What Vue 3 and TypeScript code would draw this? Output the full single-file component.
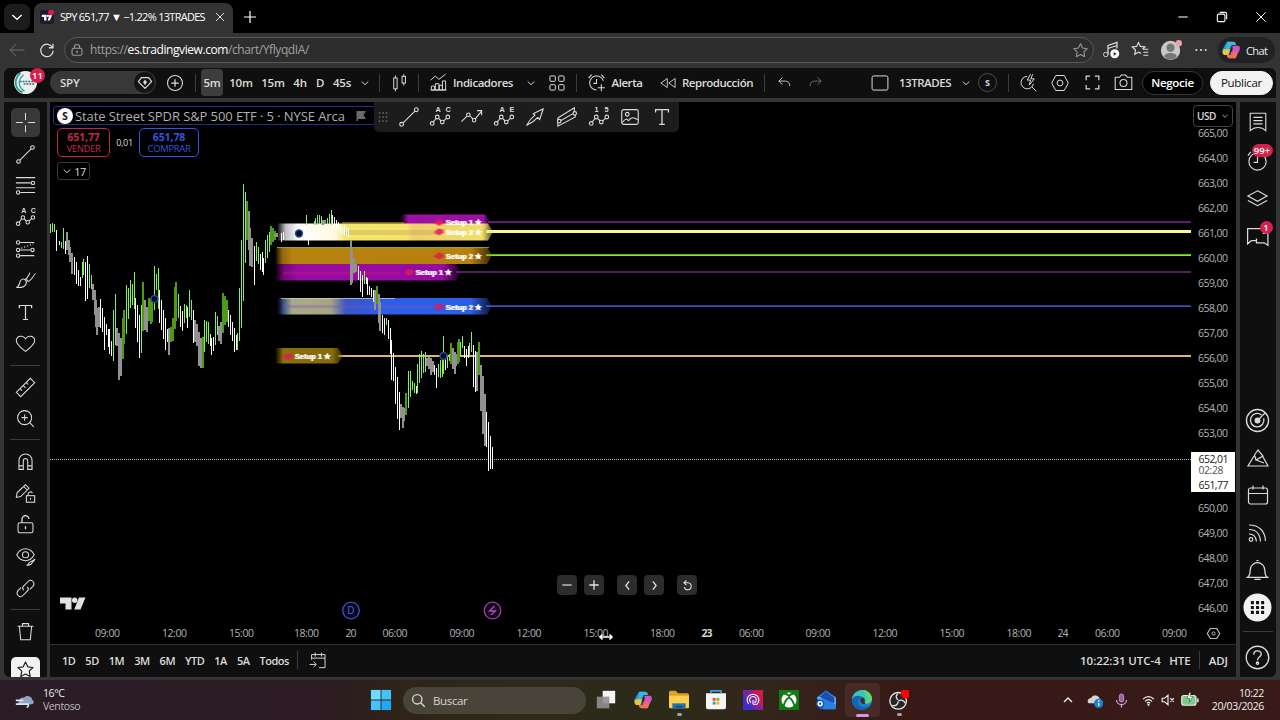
<template>
  <div class="screen">
    <div class="tabstrip">
      <div class="tab-menu"><Icon name="chevron" :size="14" /></div>
      <div class="tab">
        <Icon name="favicon" :size="14" class="fav" />
        <span class="tab-title">SPY 651,77 ▼ −1.22% 13TRADES</span>
        <Icon name="close" :size="12" class="tab-close" />
      </div>
      <Icon name="plus" :size="18" class="new-tab" />
      <div class="win-buttons">
        <Icon name="minimize" :size="14" />
        <Icon name="restore" :size="14" />
        <Icon name="close" :size="14" />
      </div>
    </div>

    <div class="addressbar">
      <Icon name="back" :size="18" class="dim" />
      <Icon name="reload" :size="18" class="reload" />
      <div class="url">
        <Icon name="padlock" :size="14" class="gray" />
        <span class="url-text">https://<b>es.tradingview.com</b>/chart/YflyqdIA/</span>
        <Icon name="star" :size="17" class="gray" />
      </div>
      <div class="browser-tools">
        <Icon name="music" :size="18" />
        <Icon name="favorites" :size="18" />
        <Icon name="profile" :size="22" />
        <Icon name="dots" :size="16" />
      </div>
      <div class="chat"><Icon name="copilot" :size="20" /><span>Chat</span></div>
    </div>

    <div class="app">
      <div class="topbar">
        <div class="cell avatar">
          <Icon name="avatar" :size="23" />
          <span class="badge">11</span>
        </div>
        <div class="symbol">
          <span>SPY</span>
          <i><Icon name="gem" :size="16" /></i>
        </div>
        <div class="cell add"><Icon name="addCircle" :size="20" /></div>
        <i class="sep s1"></i>
        <span class="cell iv active">5m</span>
        <span class="cell iv i10">10m</span>
        <span class="cell iv i15">15m</span>
        <span class="cell iv i4h">4h</span>
        <span class="cell iv id">D</span>
        <span class="cell iv i45">45s</span>
        <div class="cell w20"><Icon name="chevron" :size="10" /></div>
        <i class="sep s2"></i>
        <div class="cell candles-btn"><Icon name="candles" :size="20" /></div>
        <i class="sep s3"></i>
        <div class="cell ind"><Icon name="indicators" :size="19" /></div>
        <span class="cell label indt">Indicadores</span>
        <div class="cell indc"><Icon name="chevron" :size="10" /></div>
        <div class="cell w24"><Icon name="grid4" :size="20" /></div>
        <i class="sep s4"></i>
        <div class="cell alarm"><Icon name="alarm" :size="21" /></div>
        <span class="cell label alert">Alerta</span>
        <div class="cell rew"><Icon name="rewind" :size="18" /></div>
        <span class="cell label replay">Reproducción</span>
        <i class="sep s5"></i>
        <div class="cell w20"><Icon name="undo" :size="17" /></div>
        <div class="cell redo"><Icon name="redo" :size="17" /></div>
        <div class="cell layout"><Icon name="square" :size="20" /></div>
        <span class="cell label name">13TRADES</span>
        <div class="cell w26"><Icon name="chevron" :size="10" /></div>
        <div class="cell save"><b>S</b></div>
        <i class="sep s6"></i>
        <div class="cell t1"><Icon name="quick" :size="20" /></div>
        <div class="cell t2"><Icon name="hexagon" :size="20" /></div>
        <div class="cell t2"><Icon name="fullscreen" :size="19" /></div>
        <div class="cell t3"><Icon name="camera" :size="21" /></div>
        <div class="trade">Negocie</div>
        <div class="publish">Publicar</div>
      </div>

      <div class="main">
        <div class="leftbar">
          <template v-for="(item, index) in leftTools" :key="index">
            <i v-if="item === '-'" class="hr"></i>
            <div v-else class="tool" :class="{ on: item === 'cross' }">
              <span><Icon :name="item" :size="21" /></span>
            </div>
          </template>
          <div class="fav-box"><Icon name="star" :size="19" /></div>
        </div>

        <div class="center">
          <div class="chart">
            <svg class="plot" width="1186" height="542" viewBox="50 102 1186 542">
              <defs>
                <linearGradient v-for="b in bands" :id="b.id" :key="b.id" x1="0" x2="1" y1="0" y2="0">
                  <stop v-for="(s, i) in b.stops" :key="i" :offset="s[0]" :stop-color="s[1]" :stop-opacity="s[2]" />
                </linearGradient>
                <filter id="smear" x="-10%" width="120%" y="-10%" height="120%">
                  <feGaussianBlur stdDeviation="1 0.2" />
                </filter>
              </defs>

              <line x1="50" x2="1191" y1="459.5" y2="459.5" stroke="#c4c4c4" stroke-dasharray="1 1" />
              <line
                v-for="l in levels"
                :key="l.y"
                :x1="l.x"
                x2="1191"
                :y1="l.y"
                :y2="l.y"
                :stroke="l.color"
                :stroke-width="l.w"
              />

              <polygon v-for="b in bands" :key="b.id" :points="bandPoints(b)" :fill="`url(#${b.id})`" />
              <line x1="342" x2="404" y1="223" y2="223" stroke="#d8b43c" />
              <line x1="277" x2="489" y1="247.6" y2="247.6" stroke="#8fae1c" />
              <line x1="283" x2="400" y1="273" y2="273" stroke="#c01a86" stroke-width="3" stroke-opacity=".4" />
              <line x1="283" x2="440" y1="306.5" y2="306.5" stroke="#7a58b8" stroke-width="3" stroke-opacity=".35" />
              <line x1="281" x2="395" y1="298.500" y2="298.500" stroke="#d8d8a0" stroke-opacity=".7" />
              <path d="M286 231h56" stroke="#e05aa0" stroke-width="5" stroke-opacity=".45" stroke-dasharray="3 1" filter="url(#smear)" />
              <path d="M345 232.500h92" stroke="#b8a060" stroke-width="5" stroke-opacity=".35" />

              <g v-for="(t, i) in tags" :key="i" class="tag">
                <path :d="`M${t.x} ${t.y + 1}l4-4 5 1 1 3-5 3z`" fill="#e0195a" fill-opacity=".85" filter="url(#smear)" />
                <text :x="t.x + 12" :y="t.y + 3" textLength="36" lengthAdjust="spacingAndGlyphs">{{ t.text }}</text>
              </g>

              <g shape-rendering="crispEdges">
                <rect
                  v-for="(c, i) in candles"
                  :key="i"
                  :x="c.x"
                  :y="c.y"
                  :width="c.w"
                  :height="c.h"
                  :fill="c.fill"
                />
              </g>

              <circle
                v-for="p in anchors"
                :key="p[0]"
                :cx="p[0]"
                :cy="p[1]"
                r="3.4"
                fill="#050a18"
                stroke="#24489f"
                stroke-width="1.5"
              />

              <g class="axis">
                <text v-for="p in prices" :key="p.label" x="1198" :y="p.y" textLength="30">{{ p.label }}</text>
              </g>
              <g class="axis time">
                <text
                  v-for="t in times"
                  :key="t.x"
                  :x="t.x"
                  y="637"
                  :textLength="t.label.length > 2 ? 25 : 11"
                  :class="{ strong: t.label === '23' }"
                >
                  {{ t.label }}
                </text>
              </g>

              <rect x="1191" y="452" width="44" height="40" fill="#fff" />
              <g class="price-tag">
                <text x="1198.500" y="462.500" textLength="30">652,01</text>
                <text x="1198.500" y="474" textLength="25" class="soft">02:28</text>
                <text x="1198.500" y="488.500" textLength="30">651,77</text>
              </g>

              <g fill="#08081c" stroke="#4450c8" stroke-width="1.300">
                <circle cx="351" cy="610.500" r="8.300" />
                <circle cx="492.500" cy="610.500" r="8.300" fill="#140616" stroke="#9a3fb0" />
              </g>
              <text class="div" x="351" y="614">D</text>
              <path d="M494.500 606l-5 5h6l-4.500 4" fill="none" stroke="#b04fc8" stroke-width="1.300" />
              <path d="M60 597.500h11.500v12h-6v-6H60zM79 597.500h6.500l-5 12h-6.300z" fill="#e2e2e2" />
              <circle cx="74.700" cy="600.200" r="2.700" fill="#e2e2e2" />
              <path d="M1210.300 628.500h6.400l3 5-3 5h-6.400l-3-5z" fill="none" stroke="#b8b8b8" stroke-width="1.200" />
              <circle cx="1213.500" cy="633.500" r="1.600" fill="none" stroke="#b8b8b8" />
              <path d="M600 637h12M602.500 634.500l-2.500 2.500 2.500 2.500M609.500 634.500l2.500 2.500-2.500 2.500" fill="none" stroke="#fff" stroke-width="1.600" />
            </svg>

            <div class="legend">
              <div class="legend-title">
                <i>S</i>
                <span>State Street SPDR S&amp;P 500 ETF · 5 · NYSE Arca</span>
                <Icon name="flag" :size="12" />
              </div>
              <div class="quotes">
                <div class="quote sell"><b>651,77</b><span>VENDER</span></div>
                <small>0,01</small>
                <div class="quote buy"><b>651,78</b><span>COMPRAR</span></div>
              </div>
              <div class="count"><Icon name="chevron" :size="10" /><span>17</span></div>
            </div>

            <div class="drawbar">
              <Icon name="grip" :size="14" class="grip" />
              <div v-for="name in drawTools" :key="name" class="draw"><Icon :name="name" :size="22" /></div>
            </div>

            <div class="currency"><span>USD</span><Icon name="chevron" :size="8" /></div>

            <div class="nav">
              <button><Icon name="minus" :size="14" /></button>
              <button><Icon name="plusBold" :size="14" /></button>
              <button class="gap"><Icon name="left" :size="13" /></button>
              <button><Icon name="right" :size="13" /></button>
              <button class="gap"><Icon name="reset" :size="13" /></button>
            </div>
          </div>

          <div class="ranges">
            <span v-for="r in ranges" :key="r">{{ r }}</span>
            <i class="vr"></i>
            <Icon name="goto" :size="19" class="goto" />
            <div class="ranges-right">
              <span>10:22:31 UTC-4</span>
              <span>HTE</span>
              <i class="vr"></i>
              <span>ADJ</span>
            </div>
          </div>
        </div>

        <div class="rightbar">
          <div class="rb"><Icon name="watchlist" :size="22" /></div>
          <div class="rb"><Icon name="clock" :size="23" /><span class="badge wide">99+</span></div>
          <div class="rb"><Icon name="layers" :size="23" /></div>
          <div class="rb"><Icon name="chats" :size="25" /><span class="badge one">1</span></div>
          <div class="rb low first"><Icon name="target" :size="27" /></div>
          <div class="rb low"><Icon name="pyramid" :size="24" /></div>
          <div class="rb low"><Icon name="calendar" :size="24" /></div>
          <div class="rb low"><Icon name="feed" :size="24" /></div>
          <div class="rb low"><Icon name="bell" :size="25" /></div>
          <div class="rb low"><Icon name="apps" :size="29" /></div>
          <i class="hr"></i>
          <div class="rb help"><Icon name="help" :size="27" /></div>
        </div>
      </div>
    </div>

    <div class="taskbar">
      <div class="weather">
        <Icon name="wind" :size="20" />
        <div><span>16°C</span><span class="soft">Ventoso</span></div>
      </div>
      <Icon name="windows" :size="22" class="start" />
      <div class="search"><Icon name="search" :size="15" /><span>Buscar</span></div>
      <div class="apps">
        <div v-for="name in taskApps" :key="name" class="app-icon" :class="name">
          <Icon :name="name" :size="24" />
        </div>
      </div>
      <div class="tray">
        <Icon name="up" :size="12" class="up" />
        <Icon name="cloud" :size="16" class="cloud" />
        <Icon name="mic" :size="15" class="mic" />
        <Icon name="wifi" :size="13" class="wifi" />
        <Icon name="mute" :size="14" class="mute" />
        <Icon name="battery" :size="18" class="battery" />
        <div class="when"><span>10:22</span><span>20/03/2026</span></div>
      </div>
    </div>
  </div>
</template>

<script setup lang="ts">
import { h } from 'vue';

type Kind = 'g' | 'w' | 'G' | 's';
type Bar = [number, number, number, Kind];
interface Band {
  id: string;
  x1: number;
  x2: number;
  y1: number;
  y2: number;
  stops: [number, string, number][];
}

const nodes = '<circle cx="3.500" cy="19" r="2"/><circle cx="9" cy="12" r="2"/><circle cx="14.500" cy="17.500" r="2"/><circle cx="20.500" cy="12" r="2"/><path d="M4.700 17.400l3-3.800M10.400 13.500l2.700 2.600M16 16.200l3-2.800"/>';
const letters = (a: string, b: string) =>
  `<g fill="currentColor" stroke="none" font-family="Liberation Sans" font-weight="700" font-size="8"><text x="7" y="7">${a}</text><text x="18" y="7">${b}</text></g>`;

const icons: Record<string, string> = {
  chevron: '<path d="M4 8.500l8 7.500 8-7.500" stroke-width="2.200"/>',
  up: '<path d="M4 16l8-8 8 8" stroke-width="2.800"/>',
  favicon: '<rect width="24" height="24" rx="4" fill="#1a1d2b" stroke="none"/><path d="M3 8h8v10H7v-6H3zM16.500 8H21l-4 10h-4z" fill="#fff" stroke="none"/><circle cx="13.500" cy="10" r="2" fill="#fff" stroke="none"/><circle cx="19" cy="4" r="5" fill="#e0194b" stroke="none"/>',
  close: '<path d="M4 4l16 16M20 4L4 20" stroke-width="1.700"/>',
  plus: '<path d="M12 4v16M4 12h16" stroke-width="1.600"/>',
  minimize: '<path d="M4 12h16" stroke-width="1.800"/>',
  restore: '<rect x="4" y="7" width="13" height="13" rx="2.500" stroke-width="1.900"/><path d="M8 4h9a3 3 0 013 3v9" stroke-width="1.900"/>',
  back: '<path d="M22 12H3M11 4l-8 8 8 8"/>',
  reload: '<path d="M19.500 9A8.300 8.300 0 1020.300 13M20 3.500V9h-5.500" stroke-width="1.700"/>',
  padlock: '<rect x="3.500" y="9" width="17" height="12" rx="2.500" stroke-width="1.900"/><path d="M7.500 9V7a4.500 4.500 0 019 0v2" stroke-width="1.900"/><circle cx="12" cy="15" r="1.800" fill="currentColor" stroke="none"/>',
  star: '<path d="M12 2.500l2.900 6.100 6.600.9-4.800 4.600 1.200 6.700L12 17.600l-5.900 3.200 1.200-6.700L2.500 9.500l6.600-.9z" stroke-width="1.500" stroke-linejoin="round"/>',
  music: '<circle cx="5" cy="18" r="3"/><path d="M8 18V6l12-4v8M8 10l12-4" stroke-width="1.700"/><circle cx="17" cy="17" r="6" fill="#fff" stroke="none"/><path d="M15.500 14.500v5l4-2.500z" fill="#333" stroke="none"/>',
  favorites: '<path d="M13.500 16.500L10 14.800l-5 3 1-5.800-4.200-4 5.700-.8L10 2l2.600 5.200 5.900.8-3 3M16 11h7M16.500 15h6.500M16.500 19h6.500" stroke-width="1.600"/>',
  profile: '<circle cx="11.500" cy="12.500" r="10.500" fill="#c9c9c9" stroke="none"/><circle cx="11.500" cy="9.500" r="4.500" fill="#777" stroke="none"/><path d="M4.500 19c1-5 13-5 14 0-3 4.500-11 4.500-14 0z" fill="#777" stroke="none"/><circle cx="20.500" cy="4.500" r="3.500" fill="#e8a3ad" stroke="none"/>',
  dots: '<g fill="currentColor" stroke="none"><circle cx="5" cy="12" r="1.600"/><circle cx="12" cy="12" r="1.600"/><circle cx="19" cy="12" r="1.600"/></g>',
  copilot: '<g stroke="none"><path d="M7 2h7l-4 15H4c-3 0-3-3-2-6z" fill="#2a8fe0"/><path d="M8 2h7c2 0 3 2 3 4h-4c-2 0-3 1-4 4l-2 7H4z" fill="#3cb9d8"/><path d="M3 11l-1 3c0 3 1 4 3 4h4l2-7z" fill="#e5c936"/><path d="M17 22h-7l4-15h6c3 0 3 3 2 6z" fill="#d255c0"/><path d="M17 22h-7c-2 0-3-2-3-4h4c2 0 3-1 4-4l5 1c-1 4-2 7-3 7z" fill="#f07058"/><path d="M10.500 14L12 9h2.500L13 14z" fill="#2b2620"/></g>',
  avatar: '<circle cx="12" cy="12" r="12" fill="#e9eeee" stroke="none"/><path d="M7 2C-2 10 2 20 9 22" stroke="#2a9d8f" stroke-width="1.800"/><path d="M10 4C2 11 6 18 11 21" stroke="#3aa39a" stroke-width="1.400"/><path d="M6 11h15M10 13.500h11" stroke="#3a6b70" stroke-width="1.600" stroke-dasharray="2 1"/>',
  gem: '<path d="M6.500 4h11L22 10l-10 10L2 10z" stroke-width="1.800" stroke-linejoin="round"/><path d="M12 7l3 3.500-3 5-3-5z" fill="currentColor" stroke="none"/>',
  addCircle: '<circle cx="12" cy="12" r="9" stroke-width="1.300"/><path d="M12 7.500v9M7.500 12h9" stroke-width="1.500"/>',
  candles: '<rect x="4.500" y="6" width="4" height="13"/><path d="M6.500 3v3M6.500 19v3M16.500 1.500V4M16.500 12v3"/><rect x="14.500" y="4" width="4" height="8"/>',
  indicators: '<path d="M2 9l6-5 4.500 4L21 1.500M3 21.500v-5h4v5zM8 21.500v-8h4.500v8zM13 21.500v-6h4v6zM17 21.500V10h4v11.500zM2 21.500h20"/>',
  grid4: '<rect x="3.500" y="3.500" width="6.500" height="6.500" rx="1"/><rect x="14" y="3.500" width="6.500" height="6.500" rx="1"/><rect x="3.500" y="14" width="6.500" height="6.500" rx="1"/><rect x="14" y="14" width="6.500" height="6.500" rx="1"/>',
  alarm: '<path d="M19.800 10A8 8 0 1012 20.500M12 8v5H8.500M17.500 14v8M13.500 18h8M3 7l3.500-4M21 7l-3.500-4"/>',
  rewind: '<path d="M11 6v12l-8.500-6zM21.500 6v12L13 12z" stroke-linejoin="round"/>',
  undo: '<path d="M9 5L4 10l5 5M4 10h9c4 0 6.500 2.500 6.500 7"/>',
  redo: '<g opacity=".5"><path d="M15 5l5 5-5 5M20 10h-9c-4 0-6.500 2.500-6.500 7"/></g>',
  square: '<rect x="2.500" y="3.500" width="19" height="17" rx="2"/>',
  quick: '<path d="M11 4a7.500 7.500 0 107.500 9M16.500 16.500L22 22M15 1.500l-4 7h4l-1.500 6L19.500 7h-4l2-5.500"/>',
  hexagon: '<path d="M7 3h10l5 9-5 9H7l-5-9z" stroke-linejoin="round"/><circle cx="12" cy="12" r="3.500"/>',
  fullscreen: '<path d="M4 9V4h5M15 4h5v5M20 15v5h-5M9 20H4v-5" stroke-width="1.500"/>',
  camera: '<path d="M2.500 6h5l2-2.500h5l2 2.500h5v14h-19z" stroke-linejoin="round"/><circle cx="12" cy="12.500" r="4"/>',
  cross: '<path d="M12 1v8M12 15v8M1 12h8M15 12h8"/>',
  line: '<circle cx="4" cy="20" r="2.100"/><circle cx="20" cy="4" r="2.100"/><path d="M5.500 18.500l13-13"/>',
  fib: '<path d="M1 3h22M1 9h17M1 14.500h22M6 20h17"/><circle cx="20.500" cy="9" r="1.900"/><circle cx="3.500" cy="20" r="1.900"/>',
  pattern: nodes + letters('A', 'C'),
  patternAE: nodes + letters('A', 'E'),
  wave: nodes + letters('1', '5'),
  forecast: '<circle cx="3.500" cy="4" r="1.900"/><circle cx="3.500" cy="12.500" r="1.900"/><circle cx="3.500" cy="19" r="1.900"/><circle cx="20" cy="12.500" r="1.900"/><path d="M6 4h16M6 19h16M6 12.500h12"/><path d="M7 10.500l14-5" stroke-dasharray="1.500 2"/>',
  brush: '<path d="M1.500 20c4-1 3-5 5-8 3-4 8 0 6 4-2 5-7 4-11 4zM11.500 10c1.500 0 3 1.500 3 3M13 11c0-3 3-4 4-8M14.500 13c4 0 5-5 9-9"/>',
  textTool: '<path d="M5 7V4h14v3M12 4v16M9 20h6" stroke-width="1.400"/>',
  heart: '<path d="M12 21C7 17 1.500 13 1.500 8.500 2 3 9 2 12 6.500 15 2 22 3 22.500 8.500 22.500 13 17 17 12 21z"/>',
  ruler: '<path d="M1.500 17.500L17.500 1.500 22.500 6.500 6.500 22.500zM6 13.500l2 2M9.500 10l2.500 2.500M13 6.500l2 2"/>',
  zoomIn: '<circle cx="11" cy="11" r="8"/><path d="M17 17l4.500 4.500M11 7.500v7M7.500 11h7"/>',
  magnet: '<path d="M4.500 21V11a7.500 7.500 0 0115 0v10h-5V11a2.500 2.500 0 00-5 0v10zM4.500 17h5M14.500 17h5"/>',
  pencilLock: '<path d="M1.500 16.500L2.500 11 12 2l4 4-9.500 9.500zM10 4l4 4"/><rect x="13" y="14.500" width="9.500" height="7.500"/><path d="M15 14.500v-2a2.700 2.700 0 015-1M17.700 17v2"/>',
  unlock: '<rect x="3.500" y="10" width="17" height="11.500" rx="2"/><path d="M8 10V6.500a4 4 0 018-1M12 14v3.500" stroke-width="1.500"/>',
  eye: '<path d="M2 10c5-9 15-9 20 0-5 9-15 9-20 0z"/><circle cx="12" cy="10" r="3.500"/><path d="M13 22c3 0 2-3 5-4l5-3-4 5c-1 2-3 2-6 2z" fill="#0f0f0f"/>',
  link: '<path d="M10 14c-2-2-1-4 0-5l5-5c2-2 4-1.500 5.500 0s1.500 3.500 0 5.500L17 13M14 10c2 2 1 4 0 5l-5 5c-2 2-4 1.500-5.500 0s-1.500-3.500 0-5.500L7 11"/>',
  trash: '<path d="M3 6h18M8.500 6V3h7v3M5 6l1.500 15.500h11L19 6"/>',
  flag: '<path d="M3 2h19l-5 8 5 8H6v4H3z" fill="#6a6a6a" stroke="none"/>',
  grip: '<g fill="#666" stroke="none"><circle cx="6" cy="5" r="1.500"/><circle cx="12" cy="5" r="1.500"/><circle cx="18" cy="5" r="1.500"/><circle cx="6" cy="12" r="1.500"/><circle cx="12" cy="12" r="1.500"/><circle cx="18" cy="12" r="1.500"/><circle cx="6" cy="19" r="1.500"/><circle cx="12" cy="19" r="1.500"/><circle cx="18" cy="19" r="1.500"/></g>',
  zigzag: '<path d="M.500 17l6-6M10 11l3 3M15.500 14l7-8.500M17.500 5h5v5"/><circle cx="8" cy="9.500" r="1.900"/><circle cx="14.300" cy="15.500" r="1.900"/>',
  arrow: '<path d="M3 21c2-4 5-8 9-11l-2-1.500L21 3l-4 12-2-2.500C12 16 8 19 3 21z" stroke-linejoin="round"/>',
  channel: '<path d="M2 13L20 2v6M2 13v9L21 12V9M3.500 17L20 7.500"/><circle cx="3.500" cy="16.500" r="1.900" fill="#1c1c1c"/><circle cx="20.500" cy="8" r="1.900" fill="#1c1c1c"/>',
  image: '<rect x="3" y="4" width="18" height="16" rx="2"/><circle cx="9" cy="9" r="2"/><path d="M3.500 18c4-5 5-4 7-2 3-4 5-4 10-1"/>',
  minus: '<path d="M4 12h16" stroke-width="2"/>',
  plusBold: '<path d="M12 4v16M4 12h16" stroke-width="2.200"/>',
  left: '<path d="M15 4.500L9 12l6 7.500" stroke-width="2.400"/>',
  right: '<path d="M9 4.500l6 7.500-6 7.500" stroke-width="2.400"/>',
  reset: '<path d="M6 7h7a6.500 6.500 0 11-7 8M10 2.500L5.500 7l4.500 4.500" stroke-width="2"/>',
  goto: '<path d="M4.500 11V4.500h17V21H14M4.500 9h17M9 2v5M17 2v5M2 17h8M7 13.500l3.500 3.500L7 20.500"/>',
  watchlist: '<path d="M3.500 2.500h17v19c-2-2-4-3.500-8.500-3.500S5.500 19.500 3.500 21.500zM7 7h10M7 10.500h10M7 14h10"/>',
  clock: '<circle cx="12" cy="13" r="9"/><path d="M12 8v6H8M2 7l3-4"/>',
  layers: '<path d="M12 4l10 5.500-10 5.500L2 9.500zM2 14l10 5.500L22 14"/>',
  chats: '<path d="M6 16l-3.500 3V4.500H20V9M6 16h5M17 9h5v11.500L18.500 18H11v-4"/>',
  target: '<circle cx="12" cy="12" r="9.800"/><path d="M15.500 7A6 6 0 1017.500 10"/><circle cx="12" cy="12" r="2" fill="currentColor"/><path d="M12 12l7-7"/>',
  pyramid: '<path d="M8.500 9L12 4l5 6-7 4zM8 10l-6 10h20l-5-9M10 14l8 3"/>',
  calendar: '<rect x="2.500" y="5" width="19" height="16" rx="2"/><path d="M2.500 10.500h19M7 2.500v4M17 2.500v4"/>',
  feed: '<circle cx="5" cy="18.500" r="1.800"/><path d="M3 13c5 0 7 3 7.500 7.500M3 8.500C10 8.500 14 13 14.500 20.500M3 4c10 0 16 6 16.500 16"/>',
  bell: '<path d="M2.500 18.500c2-1.500 2.500-3 2.500-7a7 7 0 0114 0c0 4 .5 5.500 2.500 7zM9 20.500h6M11 2.500h2"/>',
  apps: '<circle cx="12" cy="12" r="11.600" fill="#f2f2f2" stroke="none"/><path d="M6.500 8h2.500M10.800 8h2.500M15 8h2.500M6.500 12h2.500M10.800 12h2.500M15 12h2.500M6.500 16h2.500M10.800 16h2.500M15 16h2.500" stroke="#111" stroke-width="2.600"/>',
  help: '<circle cx="12" cy="12" r="10"/><path d="M8.700 9.500c0-4.500 6.800-4.300 6.600-.3-.2 2.500-3.300 2.500-3.300 5.300"/><circle cx="12" cy="17" r="1"/>',
  wind: '<path d="M3 17h18c2-1 2-4 0-5a6 6 0 00-10-3 5 5 0 00-6 4z" fill="#8fa5c4" stroke="none"/><path d="M1 12.500h9M1 17h15a3 3 0 01-2 4" stroke="#dbe6f5" stroke-width="2"/>',
  windows: '<g fill="#45c3f7" stroke="none"><rect x="1" y="1" width="10.500" height="10.500" fill="#6fdcff"/><rect x="12.500" y="1" width="10.500" height="10.500"/><rect x="1" y="12.500" width="10.500" height="10.500"/><rect x="12.500" y="12.500" width="10.500" height="10.500" fill="#22a8f0"/></g>',
  search: '<circle cx="10" cy="10" r="7.500" stroke-width="2.200"/><path d="M15.500 15.500L22 22" stroke-width="2.400"/>',
  taskview: '<g stroke="none"><rect x="8" y="1" width="15" height="15" fill="#f4f4f4"/><rect x="1" y="8" width="15" height="14" fill="#8f8f8f" fill-opacity=".9"/></g>',
  explorer: '<g stroke="none"><path d="M0 3c0-1 1-2 2-2h6l3 3h11c1 0 2 1 2 2v14H0z" fill="#e0a020"/><rect x="0" y="7" width="24" height="15" rx="1.500" fill="#fad04c"/><path d="M4 22v-6h16v6z" fill="#2371b5"/><path d="M8 19h8v2H8z" fill="#0f4b85"/></g>',
  store: '<g stroke="none"><path d="M0 4h24v17c0 1-1 2-2 2H2c-1 0-2-1-2-2z" fill="#f5f5f5"/><path d="M8 9.500h3.500V13H8z" fill="#e8502e"/><path d="M12.500 9.500H16V13h-3.500z" fill="#7cb82f"/><path d="M8 14h3.500v3.500H8z" fill="#2b9fe6"/><path d="M12.500 14H16v3.500h-3.500z" fill="#f5b520"/></g><path d="M6 4V1h12v3" stroke="#3aa0dd" stroke-width="2"/>',
  fingerprint: '<rect x="0" y="0" width="24" height="24" fill="#7a22a8" stroke="none"/><path d="M11 0h13v24z" fill="#d01850" stroke="none"/><path d="M0 5v19h14z" fill="#3a30c8" stroke="none"/><path d="M7 17A7 7 0 1117 17H12M9.500 15A4 4 0 1115 14.500H13.500M12 17v-5" stroke="#fff" stroke-width="1.300"/>',
  xbox: '<rect width="24" height="24" fill="#107c10" stroke="none"/><circle cx="12" cy="12" r="9" fill="#fff" stroke="none"/><path d="M5.500 19.500c1-5 4-9 6.500-10.500 2.500 1.500 5.500 5.500 6.500 10.500M6.500 4.500c2.500 0 4.500 1.500 5.500 2.500 1-1 3-2.500 5.500-2.500" stroke="#107c10" stroke-width="2.400"/>',
  mail: '<g stroke="none"><path d="M1 9L12 0l12 9v12c0 1-1 2-2 2H5z" fill="#1666c8"/><path d="M1 9l11-7 12 7v13c-5-7-13-8-22-11z" fill="#59b0f5"/><path d="M7 6l17 12v5H9z" fill="#2a7fe0"/><path d="M4 8l18 8V9L12 2z" fill="#1a4fae"/><circle cx="5" cy="16.500" r="5" fill="#0f57b5"/></g><circle cx="5" cy="16.500" r="2.300" stroke="#fff" stroke-width="1.800"/>',
  edge: '<g stroke="none"><circle cx="12" cy="12" r="12" fill="#1583d0"/><path d="M0 11C1 3 8 0 13 0c7 .500 11 6 11 11-1 5-6 6-9 4.500 2-3 0-8-5-8C5 7.500 2 9 0 11z" fill="#3cc4b4"/><path d="M13 0c7 .500 11 6 11 11-1 5-6 6-9 4.500 4-2 4-9-2-15.500z" fill="#62d86a"/><path d="M0 12c2-5 7-6 11-4-5 2-5 10 1 12 4 1 7 0 9-1-5 8-21 6-21-7z" fill="#1264b4"/><path d="M11.500 9c-3 3-1.500 7.500 3 8 2-.2 2-1 .5-1.800 1-2.700 0-6.200-3.500-6.200z" fill="#452a28"/></g>',
  obs: '<circle cx="11" cy="13" r="10" fill="#262626" stroke="#e8e8e8" stroke-width="1.600"/><path d="M11 12C8 10 8 7 10.500 4.500M11.500 13c4-2 7 0 8 3M11 13.500c0 4-3 6-7 5" stroke="#ddd" stroke-width="1.600"/><circle cx="20" cy="4.500" r="5.800" fill="#f00" stroke="none"/>',
  cloud: '<path d="M2 17a5 5 0 014-8 7 7 0 0113 1c3 1 4 4 3 7z" fill="#d5d5d5" stroke="none"/><circle cx="17.500" cy="17" r="7" fill="#1a7fd0" stroke="none"/><path d="M17.500 16v5M17.500 12.500v2" stroke="#fff" stroke-width="2"/>',
  mic: '<rect x="8.500" y="1.500" width="7" height="13" rx="3.500" fill="#9a5fa6" stroke="#d5a5da"/><path d="M4 11c0 10 16 10 16 0M12 18.500V23" stroke="#d5a5da" stroke-width="2"/>',
  wifi: '<path d="M2 9.500c6-6 14-6 20 0M5.500 13.500c4-4 9-4 13 0M9 17c2-2 4-2 6 0" stroke-width="2.200"/><circle cx="12" cy="20" r="2" fill="currentColor" stroke="none"/>',
  mute: '<path d="M2 9v6h4l6 5V4L6 9zM16 9l6 6M22 9l-6 6" stroke-width="2"/>',
  battery: '<rect x="1" y="6" width="19" height="13" rx="3" fill="#7fc98a" stroke="#e8f5e9" stroke-width="1.600"/><path d="M22.500 10v5" stroke-width="2"/><path d="M11 2l-3 8h4l-1 5 5-8h-4l1-5z" fill="#fff" stroke="#2a5a30" stroke-width=".8"/>',
};

// one inline svg per glyph, all drawn on a 24 unit grid
const Icon = (props: { name: string; size: number }) =>
  h('svg', {
    class: 'icon',
    viewBox: '0 0 24 24',
    width: props.size,
    height: props.size,
    fill: 'none',
    stroke: 'currentColor',
    'stroke-width': 1.2,
    innerHTML: icons[props.name],
  });
Icon.props = ['name', 'size'];

const leftTools = [
  'cross', 'line', 'fib', 'pattern', 'forecast', 'brush', 'textTool', 'heart', '-',
  'ruler', 'zoomIn', '-',
  'magnet', 'pencilLock', 'unlock', 'eye', 'link', '-',
  'trash',
];
const drawTools = ['line', 'pattern', 'zigzag', 'patternAE', 'arrow', 'channel', 'wave', 'image', 'textTool'];
const ranges = ['1D', '5D', '1M', '3M', '6M', 'YTD', '1A', '5A', 'Todos'];
const taskApps = ['taskview', 'copilot', 'explorer', 'store', 'fingerprint', 'xbox', 'mail', 'edge', 'obs'];

const prices = Array.from({ length: 20 }, (_, i) => ({ label: `${665 - i},00`, y: 136.8 + i * 25.03 }))
  .filter((p) => !['652,00', '651,00'].includes(p.label));

const times = [
  ['09:00', 107.5], ['12:00', 174.5], ['15:00', 241.5], ['18:00', 306.5], ['20', 351], ['06:00', 395],
  ['09:00', 462], ['12:00', 529], ['15:00', 596], ['18:00', 662.5], ['23', 707], ['06:00', 751.5],
  ['09:00', 818], ['12:00', 885], ['15:00', 952], ['18:00', 1019], ['24', 1063], ['06:00', 1107.5],
  ['09:00', 1174.5],
].map(([label, x]) => ({ label: String(label), x: Number(x) }));

const levels = [
  { x: 488, y: 222, w: 1.6, color: '#7a2c90' },
  { x: 486, y: 231.5, w: 3, color: '#fdf58f' },
  { x: 486, y: 255.2, w: 1.8, color: '#80f01e' },
  { x: 456, y: 272, w: 1.6, color: '#702a82' },
  { x: 486, y: 306.2, w: 1.8, color: '#3c50bc' },
  { x: 338, y: 356, w: 2, color: '#dcb868' },
];

const bands: Band[] = [
  { id: 'b1', x1: 401, x2: 490, y1: 214.5, y2: 230, stops: [[0, '#9b12a3', 0], [0.08, '#9b12a3', 1], [0.93, '#9b12a3', 1], [1, '#9b12a3', 0]] },
  { id: 'b2', x1: 277, x2: 493, y1: 223.5, y2: 240.5, stops: [[0, '#fff', 0], [0.04, '#f0f0f0', 0.8], [0.1, '#fff', 1], [0.27, '#fff8e0', 1], [0.32, '#f6e56c', 1], [0.6, '#f6e46a', 1], [0.63, '#efce6c', 1], [0.95, '#f3de68', 1], [1, '#f8ee7a', 0.3]] },
  { id: 'b3', x1: 275, x2: 492, y1: 247, y2: 264, stops: [[0, '#b37a10', 0], [0.035, '#94660c', 1], [0.08, '#b8820f', 1], [0.9, '#b8800f', 1], [1, '#b8800f', 0.3]] },
  { id: 'b4', x1: 275, x2: 461, y1: 264, y2: 280.5, stops: [[0, '#8c0a94', 0], [0.05, '#72087a', 1], [0.12, '#980ba0', 1], [0.9, '#980ba0', 1], [1, '#980ba0', 0.1]] },
  { id: 'b5', x1: 277, x2: 492, y1: 298, y2: 314.5, stops: [[0, '#203a70', 0], [0.03, '#3a5488', 1], [0.07, '#a9a98a', 1], [0.25, '#a9a583', 1], [0.32, '#3a54c8', 1], [0.5, '#2b5fe8', 1], [0.9, '#2b5fe8', 1], [1, '#2b5fe8', 0.2]] },
  { id: 'b6', x1: 275, x2: 343, y1: 348, y2: 363.5, stops: [[0, '#8a6f0a', 0], [0.12, '#8a6f0a', 1], [0.85, '#856a08', 1], [1, '#856a08', 0.3]] },
];
const bandPoints = (b: Band) =>
  `${b.x1},${b.y1} ${b.x2 - 5},${b.y1} ${b.x2},${(b.y1 + b.y2) / 2} ${b.x2 - 5},${b.y2} ${b.x1},${b.y2}`;

const tags = [
  { x: 434, y: 231.5, text: 'Setup 2 ★' },
  { x: 434, y: 222, text: 'Setup 1 ★' },
  { x: 434, y: 255.5, text: 'Setup 2 ★' },
  { x: 404, y: 272, text: 'Setup 1 ★' },
  { x: 434, y: 306.5, text: 'Setup 2 ★' },
  { x: 283, y: 356, text: 'Setup 1 ★' },
];

const anchors = [[154.5, 299], [299, 233.5], [443.5, 356]];

// each bar: x, high, low in thirds of a pixel, and its kind
const morning: Bar[] = [
  [1, 148, 175, 'g'], [7, 144, 170, 'g'], [13, 147, 172, 'g'], [20, 165, 228, 'w'], [28, 197, 210, 'w'], [34, 200, 218, 'g'],
  [40, 158, 220, 'g'], [46, 198, 238, 'w'], [51, 172, 225, 's'], [56, 195, 240, 's'], [61, 215, 260, 's'], [66, 235, 298, 's'],
  [73, 246, 300, 'w'], [79, 262, 328, 'w'], [85, 285, 332, 'w'], [91, 305, 332, 'w'], [97, 262, 310, 'g'], [101, 253, 300, 'g'],
  [107, 262, 378, 'w'], [112, 242, 370, 'w'], [118, 268, 340, 'g'], [124, 300, 342, 'g'], [129, 328, 375, 's'], [134, 345, 420, 's'],
  [138, 375, 455, 's'], [142, 400, 482, 's'], [146, 395, 455, 's'], [151, 372, 460, 'w'], [157, 398, 470, 'w'], [163, 425, 525, 'w'],
  [169, 448, 480, 'w'], [175, 462, 515, 'w'], [178, 462, 538, 'w'], [184, 498, 542, 'w'], [190, 405, 558, 'g'], [196, 358, 510, 'g'],
  [202, 460, 515, 's'], [207, 475, 615, 's'], [212, 490, 603, 's'], [218, 430, 552, 'G'], [223, 405, 508, 'G'], [229, 330, 478, 'g'],
  [235, 338, 430, 'g'], [241, 315, 400, 'g'], [247, 328, 390, 'g'], [253, 290, 402, 'g'], [257, 370, 460, 'w'], [262, 390, 500, 'w'],
  [268, 420, 550, 'w'], [274, 390, 535, 'g'], [279, 322, 470, 'G'], [285, 375, 465, 's'], [290, 395, 470, 's'], [296, 370, 440, 'G'],
  [302, 372, 448, 'G'], [307, 380, 440, 'G'], [313, 273, 405, 'g'], [319, 298, 345, 'g'], [325, 278, 400, 'g'], [328, 345, 443, 'w'],
  [334, 375, 465, 'w'], [340, 405, 492, 'w'], [346, 428, 525, 'w'], [352, 462, 500, 'w'], [357, 460, 540, 's'], [363, 455, 500, 'G'],
  [368, 430, 500, 'G'], [374, 335, 460, 'G'], [379, 322, 440, 'G'], [385, 358, 430, 'g'], [391, 392, 455, 'w'], [397, 408, 468, 'w'],
  [403, 388, 445, 'g'], [409, 390, 428, 'g'], [412, 395, 458, 'w'], [418, 345, 425, 'g'], [424, 375, 435, 'g'], [430, 405, 505, 'w'],
  [436, 435, 500, 's'], [441, 448, 515, 's'], [447, 472, 575, 's'], [452, 490, 580, 's'], [458, 485, 578, 'G'], [463, 435, 530, 'g'],
  [469, 437, 500, 'g'], [475, 440, 505, 'g'], [480, 478, 515, 'w'], [484, 490, 542, 'w'], [490, 485, 528, 'w'], [496, 410, 508, 'g'],
  [502, 422, 480, 'g'], [508, 452, 498, 's'], [513, 440, 505, 's'], [518, 355, 475, 'G'], [524, 362, 450, 'G'], [530, 375, 440, 'G'],
  [536, 405, 455, 'w'], [541, 420, 480, 'w'], [547, 442, 500, 'w'], [553, 458, 530, 'w'], [559, 480, 525, 'w'], [562, 475, 525, 'g'],
  [568, 340, 498, 'g'], [574, 195, 460, 'g'], [580, 28, 378, 'g'], [586, 52, 265, 'g'], [591, 78, 195, 'G'], [596, 108, 225, 's'],
  [601, 160, 275, 's'], [606, 190, 278, 's'], [613, 213, 330, 'w'], [619, 202, 258, 'g'], [625, 215, 265, 'g'], [631, 238, 285, 'w'],
  [637, 230, 290, 'w'], [640, 250, 302, 'w'], [646, 195, 265, 'g'], [652, 180, 248, 'g'], [658, 170, 230, 'g'], [663, 152, 208, 'G'],
  [668, 158, 200, 'G'], [674, 168, 195, 'G'],
];

const afternoon: Bar[] = [
  [31, 117, 126, 's'], [37, 115, 126, 's'], [48, 115, 142, 'w'], [54, 112, 136, 'w'], [124, 60, 90, 'g'], [130, 120, 150, 'w'], [148, 78, 90, 'g'],
  [152, 68, 90, 'g'], [157, 60, 90, 'g'], [163, 60, 88, 'g'], [169, 62, 88, 'g'], [175, 74, 88, 's'], [181, 76, 88, 's'],
  [187, 70, 88, 'g'], [193, 58, 88, 'g'], [198, 46, 90, 'g'], [203, 60, 88, 'w'], [209, 66, 92, 'w'], [215, 76, 98, 'w'],
  [221, 82, 105, 'w'], [227, 86, 114, 'w'], [233, 92, 118, 'w'], [239, 90, 120, 'w'], [245, 95, 122, 'w'], [251, 100, 126, 'w'],
  [257, 136, 270, 's'], [262, 165, 265, 's'], [267, 190, 235, 's'], [272, 207, 232, 's'], [280, 212, 255, 'w'], [286, 228, 292, 'w'],
  [292, 240, 305, 'w'], [298, 228, 268, 'g'], [304, 245, 265, 'w'], [307, 250, 300, 'w'], [313, 272, 300, 'w'], [319, 278, 305, 'w'],
  [325, 285, 320, 'w'], [330, 285, 345, 's'], [335, 272, 325, 'G'], [341, 298, 385, 's'], [346, 320, 408, 's'], [352, 360, 415, 'w'],
  [358, 368, 418, 'w'], [364, 368, 390, 'g'], [370, 375, 432, 'w'], [376, 398, 475, 'w'], [379, 435, 555, 'w'], [385, 475, 560, 'w'],
  [391, 515, 625, 'w'], [397, 545, 670, 'w'], [403, 590, 703, 'w'], [408, 628, 670, 's'], [413, 635, 697, 's'], [418, 640, 680, 's'],
  [424, 595, 660, 'G'], [430, 528, 640, 'g'], [436, 528, 605, 'g'], [442, 558, 585, 'g'], [448, 565, 595, 'g'], [454, 572, 595, 'w'],
  [457, 508, 595, 'g'], [463, 478, 565, 'g'], [469, 468, 550, 'g'], [475, 478, 535, 'g'], [481, 470, 530, 'g'], [487, 490, 515, 's'],
  [493, 485, 520, 's'], [498, 490, 540, 's'], [503, 498, 530, 's'], [508, 510, 540, 'w'], [514, 520, 580, 'w'], [520, 508, 548, 'g'],
  [526, 495, 548, 'g'], [532, 480, 545, 'g'], [535, 422, 535, 'g'], [541, 490, 525, 'w'], [547, 485, 518, 'g'], [553, 478, 500, 'g'],
  [557, 443, 505, 'G'], [563, 458, 520, 's'], [569, 470, 535, 's'], [574, 478, 515, 's'], [578, 440, 505, 'G'], [582, 432, 500, 'G'],
  [587, 440, 480, 'g'], [592, 423, 458, 'g'], [598, 452, 488, 'w'], [604, 462, 512, 'w'], [610, 452, 488, 'w'], [613, 445, 485, 'g'],
  [619, 410, 470, 'g'], [625, 450, 575, 'w'], [631, 468, 592, 'w'], [636, 470, 588, 's'], [641, 440, 540, 'G'], [647, 510, 648, 's'],
  [653, 542, 715, 's'], [659, 598, 755, 's'], [664, 650, 755, 'w'], [670, 682, 830, 'w'], [676, 722, 820, 'w'], [682, 755, 820, 'w'],
];

const fills: Record<Kind, string> = { g: '#86f04e', w: '#ffffff', G: '#4d9a18', s: '#929090' };

// thin bars take one pixel column, filled ones two
const place = (bars: Bar[], left: number, top: number) =>
  bars.map(([x, high, low, kind]) => {
    const wide = kind === 'G' || kind === 's';
    return {
      x: left + (wide ? Math.round((x - 3) / 3) : Math.floor(x / 3)),
      y: Math.round(top + high / 3),
      w: wide ? 2 : 1,
      h: Math.round((low - high) / 3),
      fill: fills[kind],
    };
  });
const candles = [...place(morning, 50, 175), ...place(afternoon, 265, 195)];
</script>

<style>
body {
  background: #000;
  overflow: hidden;
}
</style>

<style scoped>
.screen {
  width: 1280px;
  height: 720px;
  display: flex;
  flex-direction: column;
  background: #333;
  color: #dbdbdb;
  font-family: 'Open Sans', 'Noto Sans', sans-serif;
  font-size: 12px;
  overflow: hidden;
}

.screen * {
  box-sizing: border-box;
}

.icon {
  flex: none;
  display: block;
}

.tabstrip {
  height: 33px;
  flex: none;
  display: flex;
  align-items: center;
  background: #000;
  color: #fff;
}

.tab-menu {
  width: 26px;
  height: 26px;
  margin-left: 4px;
  border-radius: 7px;
  background: #1c1c1c;
  display: flex;
  align-items: center;
  justify-content: center;
}

.tab {
  width: 199px;
  height: 30px;
  margin: 3px 0 0 4px;
  padding: 0 0 3px 6px;
  border-radius: 8px 8px 0 0;
  background: #333;
  display: flex;
  align-items: center;
}

.tab-title {
  width: 154px;
  margin-left: 6px;
  font-size: 11px;
  letter-spacing: -0.72px;
  white-space: nowrap;
}

.tab-close {
  margin-left: 0;
}

.new-tab {
  margin-left: 8px;
}

.win-buttons {
  margin-left: auto;
  margin-right: 12px;
  display: flex;
  gap: 25px;
}

.addressbar {
  height: 34px;
  flex: none;
  display: flex;
  align-items: center;
  padding-left: 8px;
}

.dim {
  color: #777;
}

.gray {
  color: #9a9a9a;
}

.reload {
  margin-left: 12px;
}

.url {
  width: 1030px;
  height: 26px;
  margin-left: 8px;
  padding: 0 4px 0 5px;
  border: 1px solid #585858;
  border-radius: 13px;
  background: #2d2d2d;
  display: flex;
  align-items: center;
}

.url-text {
  flex: 1;
  margin-left: 6px;
  font-size: 12px;
  letter-spacing: -0.42px;
  line-height: 16px;
  color: #a0a0a0;
}

.url-text b {
  font-weight: 400;
  color: #fff;
}

.browser-tools {
  display: flex;
  align-items: center;
  gap: 11px;
  margin-left: 8px;
}

.chat {
  width: 57px;
  height: 26px;
  margin-left: 9px;
  padding-left: 3px;
  border-radius: 13px;
  background: #222;
  color: #eee;
  display: flex;
  align-items: center;
  gap: 5px;
  font-size: 11px;
  letter-spacing: -0.6px;
}

.app {
  height: 613px;
  flex: none;
  padding: 1px 4px 3px;
  display: flex;
  flex-direction: column;
  background: #343434;
}

.topbar {
  height: 30px;
  flex: none;
  padding-bottom: 1px;
  display: flex;
  align-items: center;
  border-radius: 6px 6px 0 0;
  background: #0f0f0f;
}

.cell {
  flex: none;
  display: flex;
  align-items: center;
  justify-content: center;
  white-space: nowrap;
  position: relative;
}

.w20 { width: 20px; }
.w24 { width: 24px; }
.w26 { width: 26px; }

.avatar {
  width: 42px;
}

.badge {
  position: absolute;
  left: 26px;
  top: -3px;
  width: 15px;
  height: 15px;
  border-radius: 8px;
  background: #d6204c;
  color: #fff;
  font-size: 9.5px;
  font-weight: 600;
  line-height: 15px;
  text-align: center;
}

.symbol {
  width: 106px;
  height: 23px;
  flex: none;
  margin-left: 4px;
  padding: 0 1px 0 10px;
  border-radius: 12px;
  background: #383838;
  display: flex;
  align-items: center;
  justify-content: space-between;
  font-weight: 600;
  font-size: 11.5px;
  letter-spacing: -0.2px;
}

.symbol i {
  width: 21px;
  height: 21px;
  border-radius: 50%;
  background: #141414;
  display: flex;
  align-items: center;
  justify-content: center;
}

.add { width: 38px; }

.sep {
  flex: none;
  width: 1px;
  height: 18px;
  background: #3c3c3c;
}

.s1 { margin: 0 5px 0 1px; }
.s2 { margin: 0 3px 0 4px; }
.s3 { margin: 0 1px 0 2px; }
.s4 { margin: 0 6px 0 7px; }
.s5 { margin: 0 9px 0 10px; }
.s6 { margin: 0 7px 0 12px; }

.iv,
.label {
  font-size: 11.5px;
  font-weight: 600;
  letter-spacing: -0.45px;
}

.iv {
  letter-spacing: -0.2px;
}

.active {
  width: 22px;
  height: 27px;
  border-radius: 4px;
  background: #3d3d3d;
}

.i10 { width: 32px; margin-left: 2px; }
.i15 { width: 32px; }
.i4h { width: 22px; }
.id { width: 18px; }
.i45 { width: 26px; }
.candles-btn { width: 33px; }
.ind { width: 24px; margin-left: 6px; }
.indt { width: 62px; margin-left: 2px; }
.indc { width: 28px; margin-left: 3px; }
.alarm { width: 27px; }
.alert { width: 34px; }
.rew { width: 24px; margin-left: 12px; }
.replay { width: 73px; margin-left: 1px; }
.redo { width: 42px; }
.layout { width: 27px; margin-left: 30px; }
.name { width: 56px; margin-left: 4px; }

.save {
  width: 17px;
}

.save b {
  flex: none;
  width: 19px;
  height: 19px;
  border: 1px solid #4a4a4a;
  border-radius: 50%;
  font-size: 9px;
  line-height: 17px;
  text-align: center;
}

.t1 { width: 24px; }
.t2 { width: 24px; margin-left: 8px; }
.t3 { width: 24px; margin-left: 7px; }

.trade,
.publish {
  flex: none;
  height: 24px;
  margin-left: 7px;
  border-radius: 12px;
  font-size: 11.5px;
  line-height: 22px;
  text-align: center;
  letter-spacing: -0.3px;
}

.trade {
  width: 61px;
  border: 1px solid #363636;
  background: #000;
  color: #fff;
  font-weight: 600;
}

.publish {
  width: 63px;
  border: 1px solid #f2f2f2;
  background: #f2f2f2;
  color: #111;
}

.main {
  flex: 1;
  min-height: 0;
  margin-top: 4px;
  display: flex;
}

.leftbar {
  width: 43px;
  flex: none;
  padding: 5px 1px 0 0;
  border-radius: 0 0 0 6px;
  background: #0f0f0f;
  display: flex;
  flex-direction: column;
  align-items: center;
  overflow: hidden;
}

.tool {
  height: 31.6px;
  flex: none;
  display: flex;
  align-items: center;
}

.tool span {
  width: 29px;
  height: 29px;
  border-radius: 5px;
  display: flex;
  align-items: center;
  justify-content: center;
}

.on span {
  background: #383838;
}

.hr {
  width: 30px;
  height: 1px;
  flex: none;
  margin: 5px 0;
  background: #3c3c3c;
}

.leftbar .hr {
  margin: 5px 0 5.5px;
}

.fav-box {
  width: 29px;
  height: 28px;
  flex: none;
  margin-top: 10px;
  padding-top: 3px;
  border-radius: 5px;
  background: #f2f2f2;
  color: #222;
  display: flex;
  justify-content: center;
}

.center {
  width: 1186px;
  flex: none;
  margin-left: 3px;
  display: flex;
  flex-direction: column;
}

.chart {
  height: 542px;
  flex: none;
  position: relative;
  background: #000;
}

.plot {
  display: block;
}

.axis text {
  fill: #b4b4b4;
  font-size: 10.5px;
}

.time text {
  text-anchor: middle;
}

.axis .strong {
  font-weight: 700;
  fill: #d0d0d0;
}

.price-tag text {
  fill: #222;
  font-size: 10.5px;
}

.price-tag .soft {
  fill: #555;
}

.tag text {
  fill: #fff;
  font-family: 'Liberation Sans', sans-serif;
  font-size: 8px;
  font-weight: 700;
  filter: drop-shadow(-1px 0 0 rgba(255, 255, 255, 0.6)) drop-shadow(1px 0 0 rgba(255, 255, 255, 0.35));
}

.div {
  fill: #5563dc;
  font-size: 10px;
  text-anchor: middle;
}

.legend {
  position: absolute;
  left: 3px;
  top: 4px;
}

.legend-title {
  width: 330px;
  height: 19px;
  padding-left: 3px;
  border: 1px solid #2a2a94;
  border-radius: 3px;
  display: flex;
  align-items: center;
  color: #b0b0b0;
  font-size: 13px;
  letter-spacing: -0.09px;
  white-space: nowrap;
}

.legend-title i {
  width: 16px;
  height: 16px;
  border-radius: 50%;
  background: #fff;
  color: #111;
  font-size: 10px;
  font-weight: 700;
  font-style: normal;
  line-height: 16px;
  text-align: center;
}

.legend-title span {
  width: 280px;
  margin-left: 2px;
}

.quotes {
  margin: 3px 0 0 4px;
  display: flex;
  align-items: center;
}

.quotes small {
  width: 29px;
  font-size: 9px;
  text-align: center;
  letter-spacing: -0.3px;
  color: #ddd;
}

.quote {
  height: 29px;
  border: 1px solid;
  border-radius: 5px;
  display: flex;
  flex-direction: column;
  align-items: center;
  justify-content: center;
  font-size: 9.5px;
  letter-spacing: -0.35px;
  line-height: 11px;
}

.quote b {
  font-size: 10.5px;
  font-weight: 700;
  letter-spacing: -0.1px;
}

.sell {
  width: 53px;
  color: #c4284c;
}

.buy {
  width: 60px;
  color: #3555dc;
}

.count {
  width: 33px;
  height: 18px;
  margin: 5px 0 0 4px;
  padding: 0 3px 0 4px;
  border: 1px solid #383838;
  border-radius: 3px;
  display: flex;
  align-items: center;
  justify-content: space-between;
  font-size: 11px;
  letter-spacing: -0.4px;
}

.drawbar {
  position: absolute;
  left: 324px;
  top: 0;
  width: 305px;
  height: 30px;
  padding: 0 0 1px 2px;
  border-radius: 0 0 5px 5px;
  background: #1c1c1c;
  display: flex;
  align-items: center;
}

.grip {
  margin-right: 3px;
}

.draw {
  width: 31.65px;
  display: flex;
  justify-content: center;
}

.currency {
  position: absolute;
  left: 1143px;
  top: 3px;
  width: 40px;
  height: 22px;
  padding: 0 3px;
  border: 1px solid #444;
  border-radius: 4px;
  background: #000;
  display: flex;
  align-items: center;
  justify-content: space-between;
  font-size: 10px;
  font-weight: 600;
  letter-spacing: -0.5px;
}

.nav {
  position: absolute;
  left: 507px;
  top: 473px;
  display: flex;
  gap: 7px;
}

.nav button {
  width: 20px;
  height: 20px;
  padding: 0;
  border: 0;
  border-radius: 4px;
  background: #2c2c2c;
  color: #e4e4e4;
  display: flex;
  align-items: center;
  justify-content: center;
}

.nav .gap {
  margin-left: 6px;
}

.ranges {
  height: 33px;
  flex: none;
  padding: 0 0 2px 12px;
  border-top: 1px solid #2e2e2e;
  background: #0f0f0f;
  display: flex;
  align-items: center;
  gap: 10px;
  font-size: 11px;
  font-weight: 600;
  letter-spacing: -0.5px;
}

.vr {
  width: 1px;
  height: 18px;
  background: #3a3a3a;
}

.ranges > .vr {
  margin-left: -2px;
}

.ranges-right {
  margin-left: auto;
  padding-right: 8px;
  display: flex;
  align-items: center;
  gap: 8.5px;
  font-size: 11.5px;
  letter-spacing: -0.05px;
}

.rightbar {
  width: 36px;
  flex: none;
  margin-left: 4px;
  padding: 1px 1px 0 0;
  border-radius: 0 0 6px 0;
  background: #0f0f0f;
  display: flex;
  flex-direction: column;
  align-items: center;
}

.rb {
  width: 36px;
  height: 38px;
  flex: none;
  display: flex;
  align-items: center;
  justify-content: center;
  position: relative;
}

.low {
  height: 37.4px;
}

.first {
  margin-top: 147px;
}

.help {
  height: 40px;
}

.wide {
  left: 12px;
  top: 3px;
  width: 21px;
  height: 13px;
  line-height: 13px;
}

.one {
  left: 20px;
  top: 4px;
  width: 13px;
  height: 13px;
  line-height: 13px;
}

.taskbar {
  flex: 1;
  display: flex;
  align-items: center;
  background: linear-gradient(90deg, #2b1c26 0, #2c1b22 330px, #2f2418 400px, #2c2b19 520px, #2c2a19 680px, #33241a 780px, #371a18 900px, #381a18 1280px);
  color: #eee;
  font-size: 11px;
}

.weather {
  width: 355px;
  padding-left: 15px;
  display: flex;
  align-items: center;
  gap: 8px;
  font-size: 10.5px;
  letter-spacing: -0.4px;
}

.weather div,
.when {
  display: flex;
  flex-direction: column;
  line-height: 13px;
}

.weather .soft {
  color: #bbb;
}

.start {
  margin-left: 15px;
}

.search {
  width: 183px;
  height: 27px;
  margin-left: 11px;
  padding-left: 8px;
  border-radius: 14px;
  background: #48443a;
  display: flex;
  align-items: center;
  gap: 7px;
  font-size: 11.5px;
  letter-spacing: -0.35px;
  color: #d8d4cc;
}

.apps {
  margin-left: 2px;
  display: flex;
}

.app-icon {
  width: 36.6px;
  height: 34px;
  display: flex;
  align-items: center;
  justify-content: center;
  position: relative;
}

.app-icon svg {
  width: 20px;
  height: 20px;
}

.explorer::after,
.obs::after,
.edge::after {
  content: '';
  position: absolute;
  left: 16px;
  bottom: 1px;
  width: 5px;
  height: 3px;
  border-radius: 2px;
  background: #a8a098;
}

.edge {
  border-radius: 5px;
  background: #452a28;
  background-clip: content-box;
  padding: 0 1px;
}

.edge::after {
  left: 12px;
  bottom: 0;
  width: 13px;
  background: #d49adf;
}

.tray {
  margin-left: auto;
  padding-right: 16px;
  display: flex;
  align-items: center;
}

.cloud { margin-left: 13px; }
.mic { margin-left: 11px; }
.wifi { margin-left: 13px; }
.mute { margin-left: 6px; }
.battery { margin-left: 6px; }

.when {
  width: 65px;
  align-items: flex-end;
  font-size: 10.5px;
  letter-spacing: -0.35px;
}
</style>
